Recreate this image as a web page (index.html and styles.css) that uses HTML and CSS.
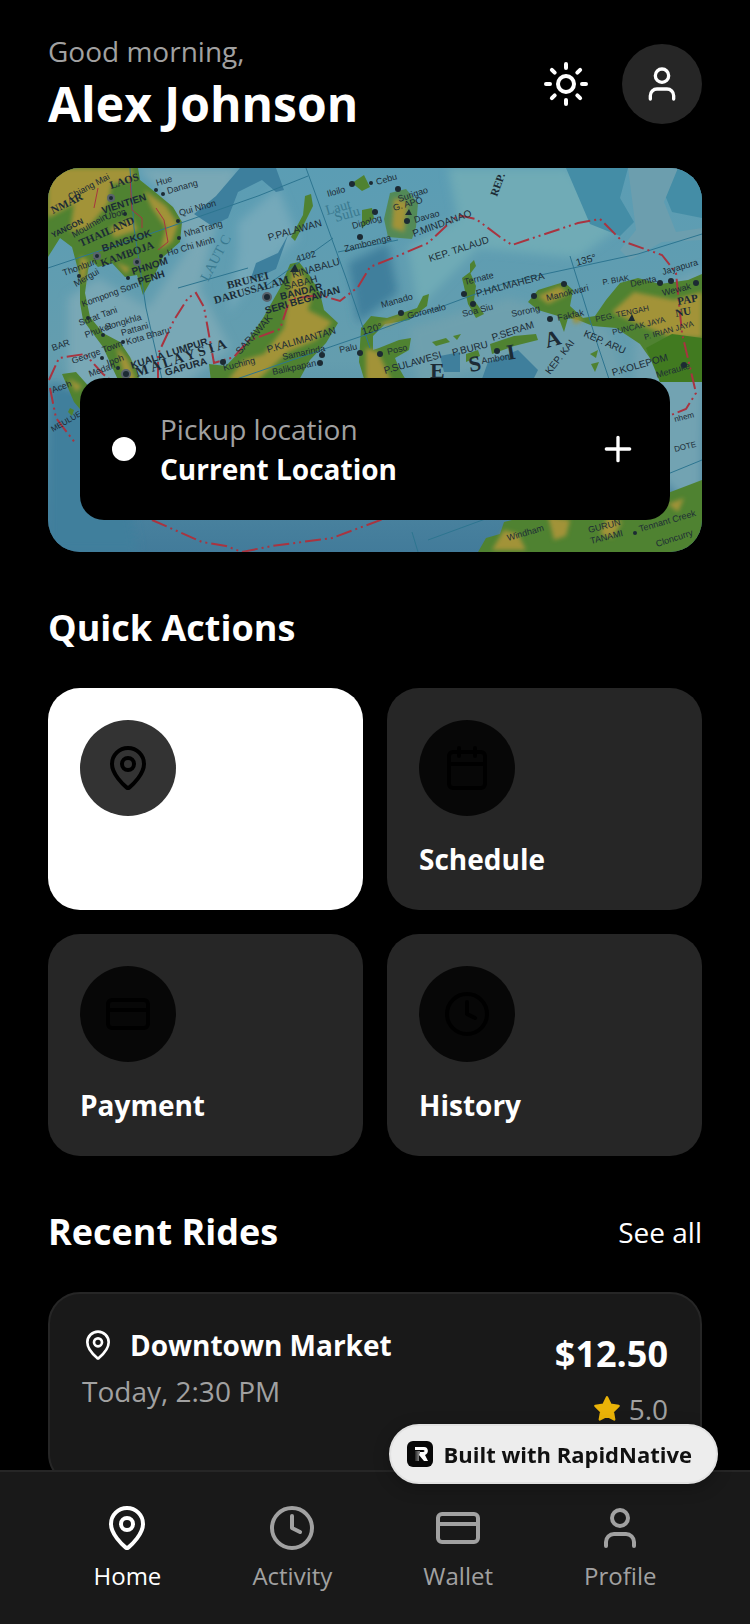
FILE: index.html
```
<!DOCTYPE html>
<html lang="en">
<head>
    <meta charset="UTF-8">
    <meta name="viewport" content="width=device-width, initial-scale=1.0">
    <title>Home</title>
    <link rel="stylesheet" href="styles.css">
</head>
<body>

    <!-- Shared icons -->
    <svg class="sprite" aria-hidden="true">
        <symbol id="pin" viewBox="0 0 24 24">
            <path d="M20 10c0 5-5.500 10.200-7.400 11.800a1 1 0 0 1-1.200 0C9.500 20.200 4 15 4 10a8 8 0 0 1 16 0Z"/>
            <circle cx="12" cy="10" r="3"/>
        </symbol>
        <symbol id="user" viewBox="0 0 24 24">
            <path d="M19 21v-2a4 4 0 0 0-4-4H9a4 4 0 0 0-4 4v2"/>
            <circle cx="12" cy="7" r="4"/>
        </symbol>
        <symbol id="clock" viewBox="0 0 24 24">
            <circle cx="12" cy="12" r="10"/>
            <path d="M12 6v6l4 2"/>
        </symbol>
        <symbol id="card" viewBox="0 0 24 24">
            <rect x="2" y="5" width="20" height="14" rx="2"/>
            <path d="M2 10h20"/>
        </symbol>
        <symbol id="calendar" viewBox="0 0 24 24">
            <path d="M8 2v4M16 2v4M3 10h18"/>
            <rect x="3" y="4" width="18" height="18" rx="2"/>
        </symbol>
    </svg>

    <div class="app">
        <main class="content">

            <header class="header">
                <div>
                    <p class="greeting">Good morning,</p>
                    <h1 class="name">Alex Johnson</h1>
                </div>
                <div class="header-actions">
                    <button class="theme-button" aria-label="Toggle theme">
                        <svg class="icon icon-lg" viewBox="0 0 24 24">
                            <circle cx="12" cy="12" r="4"/>
                            <path d="M12 2v2M12 20v2M4.93 4.93l1.41 1.41M17.66 17.66l1.41 1.41M2 12h2M20 12h2M6.34 17.66l-1.41 1.41M19.07 4.93l-1.41 1.41"/>
                        </svg>
                    </button>
                    <button class="avatar" aria-label="Profile">
                        <svg class="icon icon-md"><use href="#user"/></svg>
                    </button>
                </div>
            </header>

            <section class="map-card">
                <svg class="map" viewBox="0 0 654 384" preserveAspectRatio="xMidYMid slice" aria-hidden="true">
                    <defs>
                        <linearGradient id="sea" x1="0" y1="0" x2="0" y2="1">
                            <stop offset="0" stop-color="#5b9db4"/>
                            <stop offset=".5" stop-color="#649dae"/>
                            <stop offset="1" stop-color="#427b9a"/>
                        </linearGradient>
                        <filter id="soft"><feGaussianBlur stdDeviation="5"/></filter>
                        <filter id="relief"><feGaussianBlur stdDeviation="2"/></filter>
                    </defs>
                    <rect width="654" height="384" fill="url(#sea)"/>

                    <!-- Shallow and deep water -->
                    <g filter="url(#soft)">
                        <path fill="#79a8b6" d="M88 0h104l-20 40-20 80 30 60-50 40H20V130l30-20 50 30 40-60-30-60z"/>
                        <path fill="#75a9ba" d="M190 55l40-35 20 50-40 35-30 40 10-60z"/>
                        <path fill="#6fabb6" d="M400 0h120l50 60-40 30-100-10-60 60-10-60 50-30z"/>
                        <path fill="#6ea0ae" d="M360 160l100-30 100 30 20 60H470l-40-20-60 20z"/>
                        <path fill="#72a3b2" d="M590 130l64-30v250l-40-40-30-60z"/>
                        <path fill="#417f9c" d="M0 215l60 10 30 159H0zM300 95l40-20 10 50-40 30z"/>
                    </g>
                    <path fill="#3d7f9d" d="M192 0h36l8 22-8 2-14-12-24 12-10 26-16 8-18-12 22-18zM208 95l22-10 10-18-12 34-26 12z"/>
                    <path fill="#448da6" d="M518 0h62l-8 30 14 24-14 14-30-12zM614 20l16-20h24v50l-30-6z"/>
                    <path fill="#6c9eae" d="M580 0h50l-14 34 12 30 26-4v12l-40 2-32 18-10-10 16-20z"/>
                    <path fill="#3f7f9c" d="M440 194l30-12 20 20-10 20h-50zM392 188l20-4v20h-16z"/>

                    <!-- Land, green coasts with yellow highlands on top -->
                    <g fill="#4f8231">
                        <path d="M0 0H90L92 12 107 24 125 39 134 54 132 74 115 89 109 102 95 127 89 107 77 109 64 95 50 99 43 92 40 102 37 125 42 149 55 165 72 174 82 189 90 206 92 216H72L64 199 55 179 35 152 32 135 32 109 24 79 12 70 0 89Z"/>
                        <path d="M14 206l14-2 16 18-10 6 14 14v18l-22-26z"/>
                        <path d="M242 96L251 94 262 108 272 125 276 142 290 155 278 175 262 192 250 214H163L161 196 178 198 195 180 215 150 232 120Z"/>
                        <path d="M257 28l6-2 2 12-8 16-10 19-4-4 12-22z"/>
                        <path d="M342 25l16-4 12 14-2 24-4 12-24-2-4-18z" opacity=".7"/>
                        <path d="M313 160l10-12 16 2 30-10 6-12 6-2-2 12-18 14-24 4-12 12v14l6-2 20-8 12-2-2 12-14 8 4 10 8 14h-42l-6-20z"/>
                        <path d="M414 110l8-6 6 14-2 14 10 14-8 4-8-14zM422 96l4-4 2 6-6 8z"/>
                        <path d="M480 134L490 122 516 114 525 122 522 138 535 150 547 148 558 132 572 115 590 110 612 116 640 112 654 106V214H612L606 196 592 176 568 160 545 158 530 152 520 150 516 164 510 148 490 142Z"/>
                        <path d="M442 176l24-8 22-2 2 6-24 6-22 8zM384 174l14-4 4 4-14 4zM405 168l8-2-4 6zM418 186l12-4 2 6-14 6zM542 186l8-4-2 8zM543 196l8-2-4 10z"/>
                        <path d="M304 15l12-8 6 12-8 4zM314 42l10-2 2 10-12 10z"/>
                        <path d="M430 384l8-14 14-4 4-12 16-4 10-10 50-6 60 6 20-12 42-16 10 4v68z"/>
                        <path d="M22 240l4 2-2 6-4-4z"/>
                    </g>
                    <g fill="#a29339" filter="url(#relief)">
                        <path d="M0 0H84L86 12 64 16 60 36 40 60 22 64 26 36 0 50ZM96 22L118 38 130 56 124 74 112 82 118 60 104 40ZM62 60L84 50 90 62 66 70Z"/>
                        <path d="M68 178L80 192 88 212 78 214ZM20 210l14 8-6 6zM32 88l8 4-4 24-4-8zM68 94l14 6-4 6z"/>
                        <path d="M244 102L254 104 264 128 260 142 284 154 268 172 240 184 210 212H180L196 192 216 186 236 160 240 130Z"/>
                        <path d="M318 180L330 184 344 214H318ZM346 30l14 4-4 30-12-4zM330 156l30-10-20 12z"/>
                        <path d="M490 128L512 118 520 126 500 136ZM524 146l12 6-10 4zM564 144L586 124 626 132 654 124V170L620 168 590 156Z"/>
                        <path d="M456 362l14 4 8 16h-34zM500 348l22 4-4 16-12 4zM560 348l14 6-10 16-12-4zM620 336l16-6-6 14z"/>
                    </g>
                    <path fill="#417a20" d="M598 180l26-14 30 4v44h-42z"/>

                    <!-- Meridians -->
                    <g fill="none" stroke="#2d7590" stroke-width="1">
                        <path d="M82 0l4 60 12 80 18 80M258 0l40 110 24 70M522 88l28 90 20 60M0 100l90-30 120-42 50-20M130 120l70-20M215 120l70-50"/>
                        <path d="M180 214l140-48 140-52 130-28 64-20M290 84l60-12M370 384l-6-20M380 372l60-22M610 310l44-18"/>
                    </g>

                    <!-- Sea borders -->
                    <g class="border">
                        <path d="M1 212l10-22 26-4 18 20 20 16"/>
                        <path d="M110 210v-24l16-34 14-22 8-5 8 14 10 56 20-6 14-16 32-12 10-30 30-4 20 6 18-14 12-20 30-12 28-12 30-28 18 4 24 18 12 8 66-22 22-4 22 22 40 14 14 18 6 60 14 60-10 16-30 12"/>
                        <path d="M104 352l50 22 24 4 16 6 30-6 60-8 54-20"/>
                        <path d="M2 220l6 30 20 26"/>
                    </g>
                    <path class="land-border" d="M82 8l2 34 10 8v10M50 20l-4 20M108 40l8 12 4 22-10 8"/>

                    <g class="dots">
                        <circle cx="108" cy="22" r="2"/><circle cx="115" cy="26" r="2"/><circle cx="130" cy="53" r="2"/>
                        <circle cx="131" cy="70" r="2"/><circle cx="113" cy="88" r="2"/><circle cx="80" cy="110" r="2"/>
                        <circle cx="77" cy="46" r="2"/><circle cx="31" cy="108" r="2"/><circle cx="40" cy="150" r="2"/>
                        <circle cx="55" cy="167" r="2"/><circle cx="75" cy="174" r="2"/><circle cx="54" cy="190" r="2"/>
                        <circle cx="70" cy="200" r="2"/><circle cx="175" cy="194" r="3"/><circle cx="274" cy="187" r="3"/>
                        <circle cx="272" cy="195" r="3"/><circle cx="312" cy="185" r="3"/><circle cx="304" cy="16" r="3"/>
                        <circle cx="323" cy="15" r="2"/><circle cx="350" cy="21" r="3"/><circle cx="327" cy="44" r="3"/>
                        <circle cx="359" cy="53" r="3"/><circle cx="312" cy="69" r="3"/><circle cx="353" cy="145" r="3"/>
                        <circle cx="416" cy="126" r="3"/><circle cx="425" cy="136" r="3"/><circle cx="486" cy="128" r="3"/>
                        <circle cx="516" cy="116" r="3"/><circle cx="502" cy="151" r="3"/><circle cx="449" cy="183" r="3"/>
                        <circle cx="332" cy="186" r="3"/><circle cx="612" cy="115" r="3"/><circle cx="623" cy="113" r="3"/>
                        <circle cx="648" cy="115" r="3"/><circle cx="636" cy="197" r="3"/><circle cx="587" cy="365" r="2"/>
                        <path d="M242 104l5-8 4 8zM357 47l4-6 3 6zM580 153l4-7 3 7z"/>
                    </g>
                    <g class="capitals">
                        <circle cx="63" cy="30" r="3"/><circle cx="49" cy="88" r="3"/><circle cx="89" cy="94" r="3"/>
                        <circle cx="219" cy="129" r="4"/><circle cx="78" cy="206" r="4"/>
                    </g>

                    <g class="towns">
                        <text transform="translate(109 18) rotate(-16)">Hue</text>
                        <text transform="translate(120 26) rotate(-16)">Danang</text>
                        <text transform="translate(132 48) rotate(-16)">Qui Nhon</text>
                        <text transform="translate(137 69) rotate(-16)">NhaTrang</text>
                        <text transform="translate(120 88) rotate(-16)">Ho Chi Minh</text>
                        <text transform="translate(58 52) rotate(-16)">Ubon</text>
                        <text transform="translate(22 32) rotate(-28)">Chiang Mai</text>
                        <text transform="translate(26 70) rotate(-30)">Moulmein</text>
                        <text transform="translate(16 108) rotate(-20)">Thonburi</text>
                        <text transform="translate(28 119) rotate(-30)">Mergui</text>
                        <text transform="translate(35 139) rotate(-20)">Kompong Som</text>
                        <text transform="translate(32 158) rotate(-20)">Surat Tani</text>
                        <text transform="translate(38 170) rotate(-20)">Phuket</text>
                        <text transform="translate(58 162) rotate(-16)">Songkhla</text>
                        <text transform="translate(74 168) rotate(-16)">Pattani</text>
                        <text transform="translate(79 177) rotate(-16)">Kota Bharu</text>
                        <text transform="translate(25 196) rotate(-20)">George Town</text>
                        <text transform="translate(60 198) rotate(-20)">Ipoh</text>
                        <text transform="translate(42 209) rotate(-20)">Medan</text>
                        <text transform="translate(5 183) rotate(-20)">BAR</text>
                        <text transform="translate(5 225) rotate(-20)">Aceh</text>
                        <text class="tiny" transform="translate(5 264) rotate(-30)">MEULUE</text>
                        <text transform="translate(249 94) rotate(-16)">4102</text>
                        <text transform="translate(176 203) rotate(-14)">Kuching</text>
                        <text transform="translate(235 192) rotate(-12)">Samarinda</text>
                        <text transform="translate(225 207) rotate(-12)">Balikpapan</text>
                        <text transform="translate(292 185) rotate(-12)">Palu</text>
                        <text transform="translate(280 29) rotate(-16)">Iloilo</text>
                        <text transform="translate(305 61) rotate(-16)">Dipolog</text>
                        <text transform="translate(297 84) rotate(-14)">Zamboenga</text>
                        <text transform="translate(329 17) rotate(-16)">Cebu</text>
                        <text transform="translate(351 34) rotate(-18)">Surigao</text>
                        <text transform="translate(346 43) rotate(-16)">G. APO</text>
                        <text transform="translate(367 55) rotate(-16)">Davao</text>
                        <text transform="translate(417 117) rotate(-14)">Ternate</text>
                        <text transform="translate(334 140) rotate(-16)">Manado</text>
                        <text transform="translate(360 151) rotate(-14)">Gorontalo</text>
                        <text transform="translate(415 149) rotate(-14)">Soa Siu</text>
                        <text transform="translate(464 149) rotate(-12)">Sorong</text>
                        <text transform="translate(499 133) rotate(-14)">Manokwari</text>
                        <text transform="translate(510 153) rotate(-12)">Fakfak</text>
                        <text transform="translate(583 119) rotate(-12)">Demta</text>
                        <text transform="translate(615 107) rotate(-16)">Jayapura</text>
                        <text transform="translate(615 128) rotate(-14)">Wewak</text>
                        <text transform="translate(434 196) rotate(-10)">Ambon</text>
                        <text transform="translate(340 187) rotate(-14)">Poso</text>
                        <text transform="translate(609 210) rotate(-16)">Merauke</text>
                        <text class="tiny" transform="translate(555 117) rotate(-10)">P. BIAK</text>
                        <text class="tiny" transform="translate(548 154) rotate(-12)">PEG. TENGAH</text>
                        <text class="tiny" transform="translate(565 167) rotate(-14)">PUNCAK JAYA</text>
                        <text class="tiny" transform="translate(627 254) rotate(-14)">nhem</text>
                        <text class="tiny" transform="translate(627 284) rotate(-14)">DOTE</text>
                        <text transform="translate(460 373) rotate(-16)">Windham</text>
                        <text transform="translate(541 365) rotate(-14)">GURUN</text>
                        <text transform="translate(543 376) rotate(-14)">TANAMI</text>
                        <text transform="translate(592 364) rotate(-16)">Tennant Creek</text>
                        <text transform="translate(609 379) rotate(-18)">Cloncurry</text>
                    </g>
                    <g class="islands">
                        <text transform="translate(221 73) rotate(-16)">P.PALAWAN</text>
                        <text transform="translate(245 110) rotate(-16)">KINABALU</text>
                        <text transform="translate(237 122) rotate(-14)">SABAH</text>
                        <text transform="translate(192 187) rotate(-48)">SARAWAK</text>
                        <text transform="translate(220 185) rotate(-16)">P.KALIMANTAN</text>
                        <text transform="translate(366 69) rotate(-20)">P.MINDANAO</text>
                        <text transform="translate(382 94) rotate(-18)">KEP. TALAUD</text>
                        <text transform="translate(429 129) rotate(-15)">P.HALMAHERA</text>
                        <text transform="translate(315 167) rotate(-16)">120°</text>
                        <text transform="translate(529 98) rotate(-16)">135°</text>
                        <text class="tiny" transform="translate(597 172) rotate(-16)">P. IRIAN JAYA</text>
                        <text transform="translate(445 173) rotate(-18)">P.SERAM</text>
                        <text transform="translate(405 188) rotate(-14)">P.BURU</text>
                        <text transform="translate(337 206) rotate(-16)">P.SULAWESI</text>
                        <text transform="translate(535 168) rotate(24)">KEP. ARU</text>
                        <text transform="translate(502 207) rotate(-52)">KEP. KAI</text>
                        <text transform="translate(565 208) rotate(-16)">P.KOLEPOM</text>
                    </g>
                    <g class="cities">
                        <text transform="translate(55 46) rotate(-18)">VIENTIEN</text>
                        <text class="tiny" transform="translate(5 70) rotate(-26)">YANGON</text>
                        <text transform="translate(55 84) rotate(-18)">BANGKOK</text>
                        <text transform="translate(85 107) rotate(-18)">PHNOM</text>
                        <text transform="translate(91 117) rotate(-18)">PENH</text>
                        <text transform="translate(233 132) rotate(-14)">BANDAR</text>
                        <text transform="translate(218 146) rotate(-16)">SERI BEGAWAN</text>
                        <text transform="translate(84 201) rotate(-18)">KUALA LUMPUR</text>
                        <text transform="translate(118 208) rotate(-16)">GAPURA</text>
                    </g>
                    <g class="countries">
                        <text transform="translate(5 46) rotate(-26)">NMAR</text>
                        <text transform="translate(63 21) rotate(-18)">LAOS</text>
                        <text transform="translate(33 79) rotate(-24)">THAILAND</text>
                        <text transform="translate(54 99) rotate(-20)">KAMBOJA</text>
                        <text transform="translate(180 121) rotate(-14)">BRUNEI</text>
                        <text transform="translate(167 136) rotate(-16)">DARUSSALAM</text>
                        <text transform="translate(449 29) rotate(-70)">REP.</text>
                        <text transform="translate(630 137) rotate(-10)">PAP</text>
                        <text transform="translate(628 149) rotate(-10)">NU</text>
                    </g>
                    <g class="seas">
                        <text transform="translate(160 114) rotate(-62)">LAUT C</text>
                        <text transform="translate(279 47) rotate(-16)">Laut</text>
                        <text transform="translate(288 54) rotate(-16)">Sulu</text>
                    </g>
                    <g class="nations">
                        <text transform="translate(89 209) rotate(-18)">M A L A Y S I A</text>
                    </g>
                    <g class="nation-big">
                        <text x="382" y="210">E</text>
                        <text transform="translate(422 204) rotate(-10)">S</text>
                        <text transform="translate(460 192) rotate(-10)">I</text>
                        <text transform="translate(499 180) rotate(-16)">A</text>
                    </g>
                </svg>

                <div class="pickup">
                    <span class="pickup-dot"></span>
                    <div class="pickup-text">
                        <p class="muted">Pickup location</p>
                        <p class="label">Current Location</p>
                    </div>
                    <button class="add-button" aria-label="Add stop">
                        <svg class="icon icon-md" viewBox="0 0 24 24"><path d="M5 12h14M12 5v14"/></svg>
                    </button>
                </div>
            </section>

            <section class="section">
                <h2 class="section-title">Quick Actions</h2>
                <div class="actions">
                    <button class="action action-primary" aria-label="Book ride">
                        <span class="action-icon"><svg class="icon icon-lg"><use href="#pin"/></svg></span>
                    </button>
                    <button class="action">
                        <span class="action-icon"><svg class="icon icon-lg"><use href="#calendar"/></svg></span>
                        <span class="label">Schedule</span>
                    </button>
                    <button class="action">
                        <span class="action-icon"><svg class="icon icon-lg"><use href="#card"/></svg></span>
                        <span class="label">Payment</span>
                    </button>
                    <button class="action">
                        <span class="action-icon"><svg class="icon icon-lg"><use href="#clock"/></svg></span>
                        <span class="label">History</span>
                    </button>
                </div>
            </section>

            <section class="section">
                <div class="section-header">
                    <h2 class="section-title">Recent Rides</h2>
                    <a href="#" class="see-all">See all</a>
                </div>
                <article class="ride">
                    <div>
                        <div class="ride-place">
                            <svg class="icon icon-sm"><use href="#pin"/></svg>
                            <h3 class="label">Downtown Market</h3>
                        </div>
                        <p class="muted">Today, 2:30 PM</p>
                    </div>
                    <div class="ride-side">
                        <p class="price">$12.50</p>
                        <p class="rating">
                            <svg class="star" viewBox="0 0 24 24"><path d="M12 2l3.1 6.3 6.9 1-5 4.9 1.2 6.8-6.2-3.2L5.800 21 7 14.200 2 9.300l6.900-1z"/></svg>
                            <span class="muted">5.0</span>
                        </p>
                    </div>
                </article>
            </section>
        </main>

        <nav class="tabs">
            <a href="#" class="tab active"><svg class="icon icon-lg"><use href="#pin"/></svg>Home</a>
            <a href="#" class="tab"><svg class="icon icon-lg"><use href="#clock"/></svg>Activity</a>
            <a href="#" class="tab"><svg class="icon icon-lg"><use href="#card"/></svg>Wallet</a>
            <a href="#" class="tab"><svg class="icon icon-lg"><use href="#user"/></svg>Profile</a>
        </nav>
    </div>

    <a href="#" class="badge">
        <svg class="badge-logo" viewBox="0 0 26 26" aria-hidden="true">
            <defs>
                <linearGradient id="fade" x1="0" y1="0" x2="1" y2="0">
                    <stop offset="0" stop-color="#222"/>
                    <stop offset="1" stop-color="#999"/>
                </linearGradient>
            </defs>
            <rect width="26" height="26" rx="6" fill="#080808"/>
            <path fill="url(#fade)" d="M8 10h5l-1 4v6H8z"/>
            <path fill="#fff" d="M8 6h9c5 0 5 7 1 8l3 6h-4l-5-6 1-3h3c2 0 2-2 0-2H8z"/>
        </svg>
        Built with RapidNative
    </a>

</body>
</html>
```
FILE: styles.css
```
* {
    box-sizing: border-box;
}
body {
    margin: 0;
    background-color: #000;
    color: #fff;
    font-family: "Open Sans", "Noto Sans", sans-serif;
    font-size: 28px;
    line-height: 38px;
}
h1, h2, h3, p {
    margin: 0;
}
a {
    color: inherit;
    text-decoration: none;
}
button {
    padding: 0;
    border: none;
    background: none;
    color: inherit;
    font: inherit;
    cursor: pointer;
}
.sprite {
    display: none;
}
.app {
    display: flex;
    flex-direction: column;
    height: 100vh;
}
.content {
    flex: 1;
    min-height: 0;
    padding: 32px 48px;
    overflow-y: auto;
    scrollbar-width: none;
}

/* Icons */
.icon {
    display: block;
    flex-shrink: 0;
    fill: none;
    stroke: currentColor;
    stroke-width: 2;
    stroke-linecap: round;
    stroke-linejoin: round;
}
.icon-sm {
    width: 32px;
    height: 32px;
}
.icon-md {
    width: 40px;
    height: 40px;
}
.icon-lg {
    width: 48px;
    height: 48px;
}

/* Text */
.muted {
    color: #a1a1a1;
}
.label {
    font-size: 28px;
    font-weight: 700;
    line-height: 38px;
}

/* Header */
.header {
    display: flex;
    justify-content: space-between;
    align-items: center;
    margin-bottom: 32px;
}
.greeting {
    margin-bottom: 2px;
    color: #a1a1a1;
}
.name {
    font-size: 48px;
    font-weight: 700;
    line-height: 64px;
}
.header-actions {
    display: flex;
    align-items: center;
    gap: 32px;
}
.avatar {
    display: flex;
    align-items: center;
    justify-content: center;
    width: 80px;
    height: 80px;
    border-radius: 50%;
    background-color: #262626;
}

/* Map */
.map-card {
    position: relative;
    height: 384px;
    border-radius: 32px;
    overflow: hidden;
}
.map {
    display: block;
    width: 100%;
    height: 100%;
    font-family: "Liberation Sans", Arial, sans-serif;
}
.border, .land-border {
    fill: none;
    stroke: #a83440;
    stroke-width: 2;
    stroke-dasharray: 16 4 2 4 2 4;
}
.land-border {
    stroke-width: 1;
    stroke-dasharray: none;
}
.dots {
    fill: #1c2a33;
}
.capitals {
    fill: #1c2a33;
    stroke: #59636b;
    stroke-width: 2;
}
.towns, .islands, .cities, .countries {
    fill: #1c2b35;
}
.towns {
    font-size: 9px;
}
.islands {
    font-size: 10px;
}
.cities {
    font-size: 10px;
    font-weight: 700;
}
.tiny {
    font-size: 8px;
}
.countries {
    font-family: "Liberation Serif", serif;
    font-size: 11px;
    font-weight: 700;
}
.seas {
    fill: #39798f;
    font-family: "Liberation Serif", serif;
    font-size: 14px;
}
.nations, .nation-big {
    fill: #1c2b35;
    font-family: "Liberation Serif", serif;
    font-size: 14px;
    font-weight: 700;
}
.nation-big {
    font-size: 22px;
}
.pickup {
    position: absolute;
    left: 32px;
    right: 32px;
    bottom: 32px;
    display: flex;
    align-items: center;
    gap: 24px;
    padding: 32px;
    border-radius: 24px;
    background-color: #000;
}
.pickup-dot {
    width: 24px;
    height: 24px;
    border-radius: 50%;
    background-color: #fff;
}
.pickup-text {
    display: flex;
    flex: 1;
    flex-direction: column;
    gap: 2px;
}

/* Sections */
.section {
    margin-top: 48px;
}
.section-title {
    font-size: 36px;
    font-weight: 700;
    line-height: 56px;
}
.section-header {
    display: flex;
    justify-content: space-between;
    align-items: center;
}

/* Quick actions */
.actions {
    display: grid;
    grid-template-columns: 1fr 1fr;
    gap: 24px;
    margin-top: 32px;
}
.action {
    display: flex;
    flex-direction: column;
    align-items: flex-start;
    justify-content: flex-start;
    gap: 24px;
    padding: 32px;
    border-radius: 32px;
    background-color: #262626;
}
.action-icon {
    display: flex;
    align-items: center;
    justify-content: center;
    width: 96px;
    height: 96px;
    border-radius: 50%;
    background-color: rgba(0, 0, 0, 0.8);
    color: #000;
}
.action-primary {
    background-color: #fff;
}

/* Recent rides */
.ride {
    display: flex;
    justify-content: space-between;
    margin-top: 32px;
    padding: 32px 32px 56px;
    border: 2px solid #262626;
    border-radius: 32px;
    background-color: #191919;
}
.ride-place {
    display: flex;
    align-items: center;
    gap: 16px;
    margin-bottom: 8px;
}
.ride-side {
    display: flex;
    flex-direction: column;
    align-items: flex-end;
    gap: 8px;
}
.price {
    font-size: 36px;
    font-weight: 700;
    line-height: 56px;
}
.rating {
    display: flex;
    align-items: center;
    gap: 8px;
}
.star {
    width: 28px;
    height: 28px;
    fill: #eab308;
    stroke: #eab308;
    stroke-width: 2;
    stroke-linejoin: round;
}

/* Bottom tabs */
.tabs {
    display: flex;
    justify-content: space-around;
    padding: 32px 48px;
    border-top: 2px solid #262626;
    background-color: #191919;
}
.tab {
    display: flex;
    flex-direction: column;
    align-items: center;
    gap: 8px;
    color: #a1a1a1;
    font-size: 24px;
    line-height: 32px;
}
.tab.active {
    color: #fff;
}

/* Floating badge */
.badge {
    position: fixed;
    right: 32px;
    bottom: 140px;
    display: flex;
    align-items: center;
    gap: 10px;
    padding: 14px 24px 14px 16px;
    border: 2px solid #e2e2e2;
    border-radius: 30px;
    background-color: #ededed;
    box-shadow: 0 4px 16px rgba(0, 0, 0, 0.25);
    color: #111;
    font-size: 22px;
    font-weight: 700;
    line-height: 28px;
}
.badge-logo {
    width: 26px;
    height: 26px;
}
```
